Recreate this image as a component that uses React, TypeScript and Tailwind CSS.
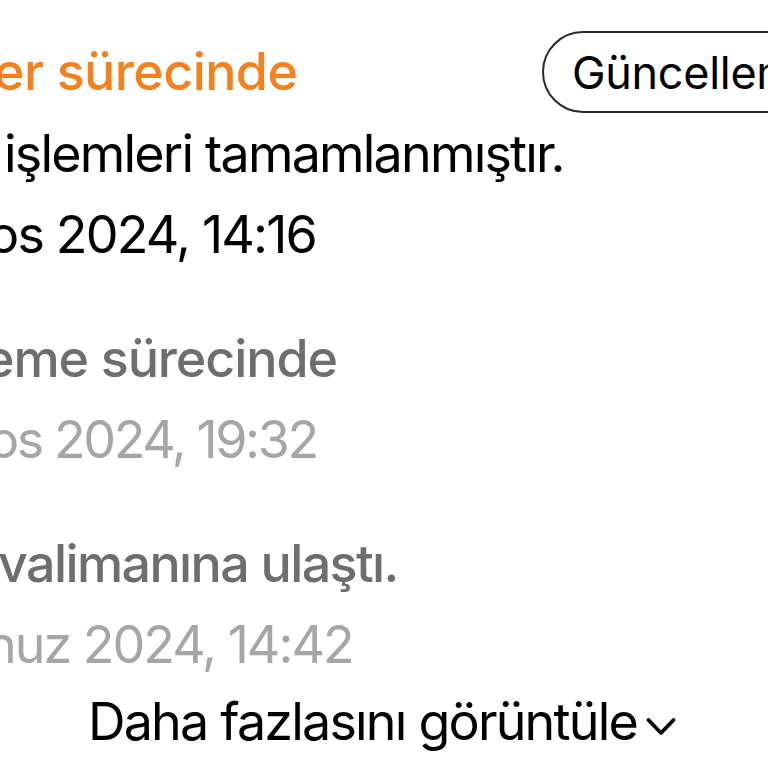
type Step = {
    title: string; titleCls: string; desc?: string; descCls?: string;
    date: string; dateCls: string; active?: boolean;
};

const steps: Step[] = [
    {
        title: 'er sürecinde', titleCls: '-ml-[6px] tracking-[-0.6px]',
        desc: 'işlemleri tamamlanmıştır.', descCls: 'ml-[4px]',
        date: 'os 2024, 14:16', dateCls: '-ml-[12px]', active: true,
    },
    { title: 'eme sürecinde', titleCls: '-ml-[16px] tracking-[-1.1px]', date: 'os 2024, 19:32', dateCls: '-ml-[12px] tracking-[-2.4px]' },
    { title: 'valimanına ulaştı.', titleCls: '-ml-[2px] tracking-[-1.6px]', date: 'nuz 2024, 14:42', dateCls: '-ml-[14px] tracking-[-2px]' },
];

const Chevron = () => (
    <svg width="30" height="20" viewBox="0 0 30 20" fill="none" className="shrink-0 mt-[10px]">
        <path d="M2.5 3 L15 16 L27.5 3" stroke="#000" strokeWidth="3.8" strokeLinecap="round" strokeLinejoin="round" />
    </svg>
);

export default function App() {
    return (
        <div className="w-[768px] h-[768px] overflow-hidden bg-white text-[52px] leading-[81px] tracking-[-1.8px]"
             style={{ fontFamily: 'Inter, "Noto Sans", sans-serif' }}>
            <div className="flex flex-col pt-[29px]">
                {steps.map((s, i) => (
                    <div key={i} className={i > 0 ? 'mt-[43px]' : ''}>
                        <div className="flex items-center">
                            <div className={`shrink-0 whitespace-nowrap font-medium ${s.titleCls} ${s.active ? 'w-[548px] text-[#f5801e]' : 'text-[#6e6e6e]'}`}>
                                {s.title}
                            </div>
                            {s.active && (
                                <button className="shrink-0 whitespace-nowrap h-[82px] mt-[2px] rounded-full border-2 border-[#2a2a2a] pl-[28px] pr-[32px] text-[45px] leading-none tracking-[-0.3px] text-black">
                                    Güncellemeler
                                </button>
                            )}
                        </div>
                        {s.desc && <div className={`whitespace-nowrap text-black ${s.descCls}`}>{s.desc}</div>}
                        <div className={`whitespace-nowrap ${s.dateCls} ${s.active ? 'text-black' : 'text-[#a6a6a6]'}`}>
                            {s.date}
                        </div>
                    </div>
                ))}
                <button className="-mt-[4px] flex items-center justify-center gap-[9px] text-black w-full pr-[4px]">
                    <span>Daha fazlasını görüntüle</span>
                    <Chevron />
                </button>
            </div>
        </div>
    );
}
